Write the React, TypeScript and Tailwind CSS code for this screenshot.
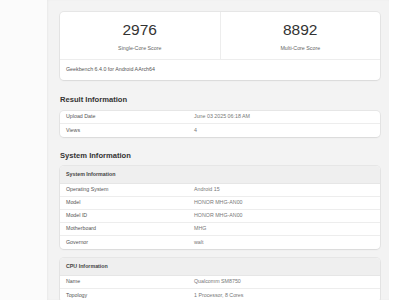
const systemRows = [
  { label: 'Operating System', value: 'Android 15' },
  { label: 'Model', value: 'HONOR MHG-AN00' },
  { label: 'Model ID', value: 'HONOR MHG-AN00' },
  { label: 'Motherboard', value: 'MHG' },
  { label: 'Governor', value: 'walt' },
]

const cpuRows = [
  { label: 'Name', value: 'Qualcomm SM8750' },
  { label: 'Topology', value: '1 Processor, 8 Cores' },
]

function InfoRow({ label, value, last }: { label: string; value: string; last?: boolean }) {
  return (
    <div className={`flex h-[13px] items-center ${last ? '' : 'border-b border-[#ededed]'}`}>
      <div className="w-[134px] pl-[6px] text-[#555]">{label}</div>
      <div className="flex-1 text-[#777]">{value}</div>
    </div>
  )
}

function InfoTable({ title, rows }: { title?: string; rows: { label: string; value: string }[] }) {
  return (
    <div className="overflow-hidden rounded-[4px] bg-white shadow-[0_0_0_1px_rgba(0,0,0,0.05),0_1px_2px_rgba(0,0,0,0.06)]">
      {title && (
        <div className="flex h-[18px] items-center border-b border-[#e6e6e6] bg-[#efefef] pl-[6px] font-bold text-[#444]">
          {title}
        </div>
      )}
      {rows.map((r, i) => (
        <InfoRow key={r.label} label={r.label} value={r.value} last={i === rows.length - 1} />
      ))}
    </div>
  )
}

export default function App() {
  return (
    <div className="flex h-[300px] w-[400px] overflow-hidden bg-white font-['Liberation_Sans',Arial,sans-serif] text-[5.3px] leading-none">
      <div className="w-[47px] shrink-0 bg-[#fbfbfb]" />
      <main className="w-[342px] shrink-0 bg-[#f3f3f3] pl-[13px] pr-[9px] pt-[12px] shadow-[inset_1px_0_2px_rgba(0,0,0,0.04)]">
        <div className="overflow-hidden rounded-[4px] bg-white shadow-[0_0_0_1px_rgba(0,0,0,0.05),0_1px_2px_rgba(0,0,0,0.06)]">
          <div className="flex h-[48px] border-b border-[#ededed]">
            <div className="flex flex-1 flex-col items-center border-r border-[#ededed] pt-[11px]">
              <div className="text-[15.5px] leading-[14px] text-[#333]">2976</div>
              <div className="mt-[9px] text-[#666]">Single-Core Score</div>
            </div>
            <div className="flex flex-1 flex-col items-center pt-[11px]">
              <div className="text-[15.5px] leading-[14px] text-[#333]">8892</div>
              <div className="mt-[9px] text-[#666]">Multi-Core Score</div>
            </div>
          </div>
          <div className="flex h-[20px] items-center pl-[6px] text-[#555]">Geekbench 6.4.0 for Android AArch64</div>
        </div>

        <h2 className="mt-[15px] mb-[6px] h-[10px] text-[7.6px] font-bold leading-[10px] text-[#333]">Result Information</h2>
        <InfoTable
          rows={[
            { label: 'Upload Date', value: 'June 03 2025 06:18 AM' },
            { label: 'Views', value: '4' },
          ]}
        />

        <h2 className="mt-[14px] mb-[5px] h-[10px] text-[7.6px] font-bold leading-[10px] text-[#333]">System Information</h2>
        <InfoTable title="System Information" rows={systemRows} />

        <div className="mt-[9px]">
          <InfoTable title="CPU Information" rows={cpuRows} />
        </div>
      </main>
      <div className="flex-1 bg-white" />
    </div>
  )
}
